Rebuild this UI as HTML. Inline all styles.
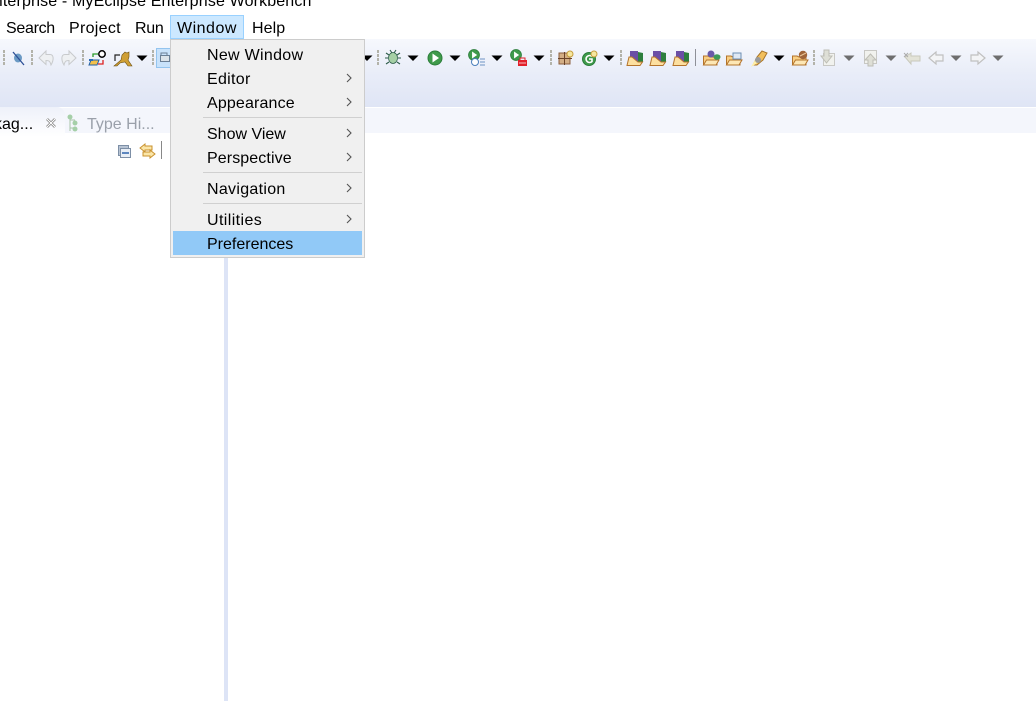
<!DOCTYPE html>
<html><head><meta charset="utf-8"><style>
html,body{margin:0;padding:0;background:#fff}
#r{position:relative;width:1036px;height:701px;overflow:hidden;background:#fff;font-family:"Liberation Sans","Noto Sans CJK SC",sans-serif;font-size:16px;color:#000}
#r div{position:absolute;box-sizing:border-box}
.t{white-space:nowrap;line-height:20px;height:20px}
</style></head><body><div id="r">
<div class="t" style="left:-17px;top:-8px;letter-spacing:.14px">Enterprise - MyEclipse Enterprise Workbench</div>
<div class="t" style="left:6px;top:19px;letter-spacing:-.3px">Search</div>
<div class="t" style="left:69px;top:19px;letter-spacing:.3px">Project</div>
<div class="t" style="left:135px;top:19px;letter-spacing:-.3px">Run</div>
<div style="left:170px;top:15px;width:74px;height:24px;background:#cce8ff;border:1px solid #99d1ff"></div>
<div class="t" style="left:177px;top:19px;letter-spacing:.5px">Window</div>
<div class="t" style="left:252px;top:19px;letter-spacing:.1px">Help</div>

<div style="left:0;top:39px;width:1036px;height:68px;background:linear-gradient(#f6f8fd,#e9edf8 50%,#dfe5f5)"></div>
<div style="left:0;top:107px;width:1036px;height:1px;background:#fff"></div>
<div style="left:0;top:108px;width:1036px;height:25px;background:#f4f6fc"></div>
<div style="left:0;top:107px;width:65px;height:30px;background:linear-gradient(#eef1fa,#fff);border-top-right-radius:8px"></div>
<div class="t" style="left:-6px;top:115px">kag...</div>
<div class="t" style="left:87px;top:115px;color:#9aa0aa">Type Hi...</div>
<div style="left:224px;top:257px;width:4px;height:444px;background:#dde4f6"></div>
<div style="left:161px;top:141px;width:1px;height:18px;background:#888"></div>

<svg style="position:absolute;left:0;top:0" width="1036" height="701" xmlns="http://www.w3.org/2000/svg">
<defs>
<g id="grip" fill="#b3b3aa"><rect x="-1" y="-8" width="2" height="3"/><rect x="-1" y="-4" width="2" height="3"/><rect x="-1" y="0" width="2" height="3"/><rect x="-1" y="4" width="2" height="3"/></g>
<path id="a" d="M-5.500-2.500H5.500L0 3Z" fill="#000"/>
<path id="ag" d="M-5.500-2.500H5.500L0 3Z" fill="#6e6e6e"/>
<g id="run"><circle r="7" fill="#3f9a4b" stroke="#2b7d3a"/><path d="M-2.500-4.500L4 0L-2.500 4.500Z" fill="#fff"/></g>
<g id="fold"><path d="M-7.500 7L-7.500 -2H-3L-1 -1L6-1V7Z" fill="#f9cf83" stroke="#b4742c"/><path d="M-7.500 7L-4.500 2H8L5 7Z" fill="#fde7b5" stroke="#b4742c"/></g>
<g id="pfold"><path d="M3-6L8-5V4H3Z" fill="#2d7f3e"/><path d="M-5-7L3-7V4H-5Z" fill="#6b4fa6"/><path d="M-8 7.500L-6-1H-3L3 4L7.500 4L5 7.500Z" fill="#fcdf9f" stroke="#b4742c"/></g>
</defs>
<g transform="translate(0,58)"><use href="#grip" x="4"/><use href="#grip" x="32"/><use href="#grip" x="83"/><use href="#grip" x="153"/><use href="#grip" x="378"/><use href="#grip" x="551"/><use href="#grip" x="621"/><use href="#grip" x="814"/></g>
<rect x="695" y="49" width="1" height="17" fill="#8e9098"/>
<g>
<ellipse cx="18" cy="58" rx="4" ry="4.500" fill="#6b9ac4"/><path d="M13 52L24 65" stroke="#2c4f96" stroke-width="1.300"/>
<path d="M39 58L46 51V54.500H50C54 54.500 54 60 51 65C50 61 49 60.500 46 60.500V64.500Z" fill="#eef0f2" stroke="#c8cacc"/>
<path d="M76 58L69 51V54.500H65C61 54.500 61 60 64 65C65 61 66 60.500 69 60.500V64.500Z" fill="#eef0f2" stroke="#c8cacc"/>
<path d="M89 65L91 60H99L97 65Z" fill="#f3c04a" stroke="#1f5fa8"/><path d="M89 59H93V61H89Z" fill="#2a6cb8"/>
<path d="M93 57V54H98" fill="none" stroke="#2a9a2a" stroke-width="1.300"/><path d="M98 64H103V60" fill="none" stroke="#d22" stroke-width="1.300"/>
<circle cx="102" cy="54" r="3.200" fill="#fff" stroke="#000" stroke-width="1.500"/>
<path d="M114 66L121 60L122 55L124 53L125 52L127 53L129 52V57L128 60L132 66H128L125 62L120 63L117 66Z" fill="#cf9f35" stroke="#6b4f12" stroke-width=".6"/>
<path d="M115 61V55H120" fill="none" stroke="#222" stroke-width="1.200"/>
<use href="#a" x="142" y="58"/>
<rect x="156.500" y="48.500" width="14" height="19" fill="#c8e2fb" stroke="#93c4ef"/>
<path d="M161 55V53H167V55" fill="none" stroke="#6a7f96"/><rect x="160.500" y="55.500" width="9" height="6" fill="#dbe3ea" stroke="#6a7f96"/>
<use href="#a" x="367" y="58"/>
<ellipse cx="393" cy="58" rx="4.500" ry="5.500" fill="#a5d0a5" stroke="#2d5c4a" stroke-width=".8"/>
<path d="M386 53L389 55M400 53L397 55M385 58H388M398 58H401M386 64L389 62M400 64L397 62M390 50L392 53M396 50L394 53" stroke="#2d5c4a" stroke-width="1.100" fill="none"/>
<use href="#a" x="413" y="58"/>
<use href="#run" x="435" y="58"/>
<use href="#a" x="455" y="58"/>
<g transform="translate(474,55) scale(.78)"><use href="#run"/></g>
<circle cx="475" cy="62" r="3.500" fill="#fff" stroke="#4a7fbc"/>
<path d="M480 59H485M480 62H485M480 65H485" stroke="#6d93c4"/>
<use href="#a" x="497" y="58"/>
<g transform="translate(516,55) scale(.78)"><use href="#run"/></g>
<rect x="518" y="60" width="9" height="6" fill="#e2202a"/><path d="M520 60V58H525V60" fill="none" stroke="#e2202a"/><path d="M519 63H526" stroke="#fff" stroke-width=".7"/>
<use href="#a" x="539" y="58"/>
<rect x="559" y="53" width="11" height="11" fill="#d3ae85" stroke="#8a5e3e"/><path d="M558 58.500H572M564.500 52V65" stroke="#6b4327"/>
<circle cx="570" cy="54" r="3" fill="#f6e79f" stroke="#c69d3c"/>
<circle cx="589" cy="59" r="6.500" fill="#3f9a4b" stroke="#2b7d3a"/><path d="M592 56.500A3.500 3.500 0 1 0 592 61.500V59H589" fill="none" stroke="#fff" stroke-width="1.600"/>
<circle cx="594" cy="54" r="3" fill="#f6e79f" stroke="#c69d3c"/>
<use href="#a" x="609" y="58"/>
<use href="#pfold" x="635" y="58"/><use href="#pfold" x="658" y="58"/><use href="#pfold" x="681" y="58"/>
<use href="#fold" x="711" y="58"/>
<circle cx="711" cy="54" r="3.500" fill="#6a5aa8"/><ellipse cx="717" cy="57" rx="3.500" ry="2.800" fill="#3d9a58"/>
<use href="#fold" x="734" y="58"/>
<rect x="733" y="53" width="8" height="6" fill="#dfe8f4" stroke="#6d8fb3"/>
<path d="M753 65L757 57L762 51L767 53L763 60L757 65Z" fill="#f2bf5c" stroke="#a8752a"/><path d="M751 67L755 60L759 62Z" fill="#fff0a8"/><circle cx="758" cy="60" r="3" fill="#9a9a9a"/>
<use href="#a" x="779" y="58"/>
<use href="#fold" x="800" y="58"/>
<circle cx="803" cy="55" r="4.200" fill="#a0653a"/><path d="M800 56L806 53" stroke="#eac69a"/>
<rect x="823.500" y="53.500" width="11" height="12" fill="#f1f2ee" stroke="#c8c8c4"/><path d="M821 50H826V56H829L823.500 63L818 56H821Z" fill="#dedfd6" stroke="#bdbdb5" transform="translate(3,0)"/>
<use href="#ag" x="849" y="58"/>
<rect x="864.500" y="50.500" width="12" height="13" fill="#f1f2ee" stroke="#c8c8c4"/><path d="M868 66V60H865L870.500 54L876 60H873V66Z" fill="#dedfd6" stroke="#bdbdb5"/>
<use href="#ag" x="891" y="58"/>
<path d="M905 57L911 53V56H920V61H911V64Z" fill="#e3e3d8" stroke="#c8c8bc"/><path d="M904 53L908 57M908 53L904 57" stroke="#aaa"/>
<use href="#ag" x="956" y="58"/>
<path d="M929 58L936 52V55H943V61H936V64Z" fill="#f3f4f6" stroke="#c0c0c0" stroke-width="1.200"/>
<path d="M985 58L978 52V55H971V61H978V64Z" fill="#f3f4f6" stroke="#c0c0c0" stroke-width="1.200"/>
<use href="#ag" x="998" y="58"/>
<path d="M47 119L55 127M55 119L47 127" stroke="#777" stroke-width="2.600"/><path d="M47 119L55 127M55 119L47 127" stroke="#fff" stroke-width="1.200"/>
<path d="M70 117V131M70 120H75M70 128H75" stroke="#a9c4a9" fill="none"/><circle cx="70" cy="117" r="2.500" fill="#a5cfa8"/><circle cx="75" cy="123" r="2.500" fill="#a5cfa8"/><circle cx="75" cy="129" r="2.500" fill="#a5cfa8"/>
<rect x="118.500" y="145.500" width="10" height="10" fill="#b8c4d4" stroke="#7d8fa6"/><rect x="120.500" y="148.500" width="10" height="9" fill="#e8eef6" stroke="#7d8fa6"/><path d="M122 153H129" stroke="#1f5aa8" stroke-width="1.400"/>
<path d="M140 148L145 144V146H152V150H145V152Z" fill="#fbe6a8" stroke="#c8912e"/><path d="M155 154L150 150V152H143V156H150V158Z" fill="#fbe6a8" stroke="#c8912e"/>
</g>
</svg>

<div style="left:170px;top:39px;width:195px;height:219px;background:#f0f0f0;border:1px solid #ccc"></div>
<div style="left:203px;top:117px;width:159px;height:1px;background:#d0d0d0"></div>
<div style="left:203px;top:172px;width:159px;height:1px;background:#d0d0d0"></div>
<div style="left:203px;top:203px;width:159px;height:1px;background:#d0d0d0"></div>
<div style="left:173px;top:231px;width:189px;height:24px;background:#91c9f7"></div>
<div class="t" style="left:207px;top:46px;letter-spacing:.3px">New Window</div>
<div class="t" style="left:207px;top:70px;letter-spacing:.3px">Editor</div>
<div class="t" style="left:207px;top:94px;letter-spacing:.15px">Appearance</div>
<div class="t" style="left:207px;top:125px">Show View</div>
<div class="t" style="left:207px;top:149px;letter-spacing:.1px">Perspective</div>
<div class="t" style="left:207px;top:180px;letter-spacing:.3px">Navigation</div>
<div class="t" style="left:207px;top:211px;letter-spacing:.4px">Utilities</div>
<div class="t" style="left:207px;top:235px">Preferences</div>
<svg style="position:absolute;left:0;top:0" width="1036" height="701" xmlns="http://www.w3.org/2000/svg" fill="none" stroke="#555" stroke-width="1.100">
<path d="M347 74L351 78L347 82M347 98L351 102L347 106M347 129L351 133L347 137M347 153L351 157L347 161M347 184L351 188L347 192M347 215L351 219L347 223"/>
</svg>
</div></body></html>
